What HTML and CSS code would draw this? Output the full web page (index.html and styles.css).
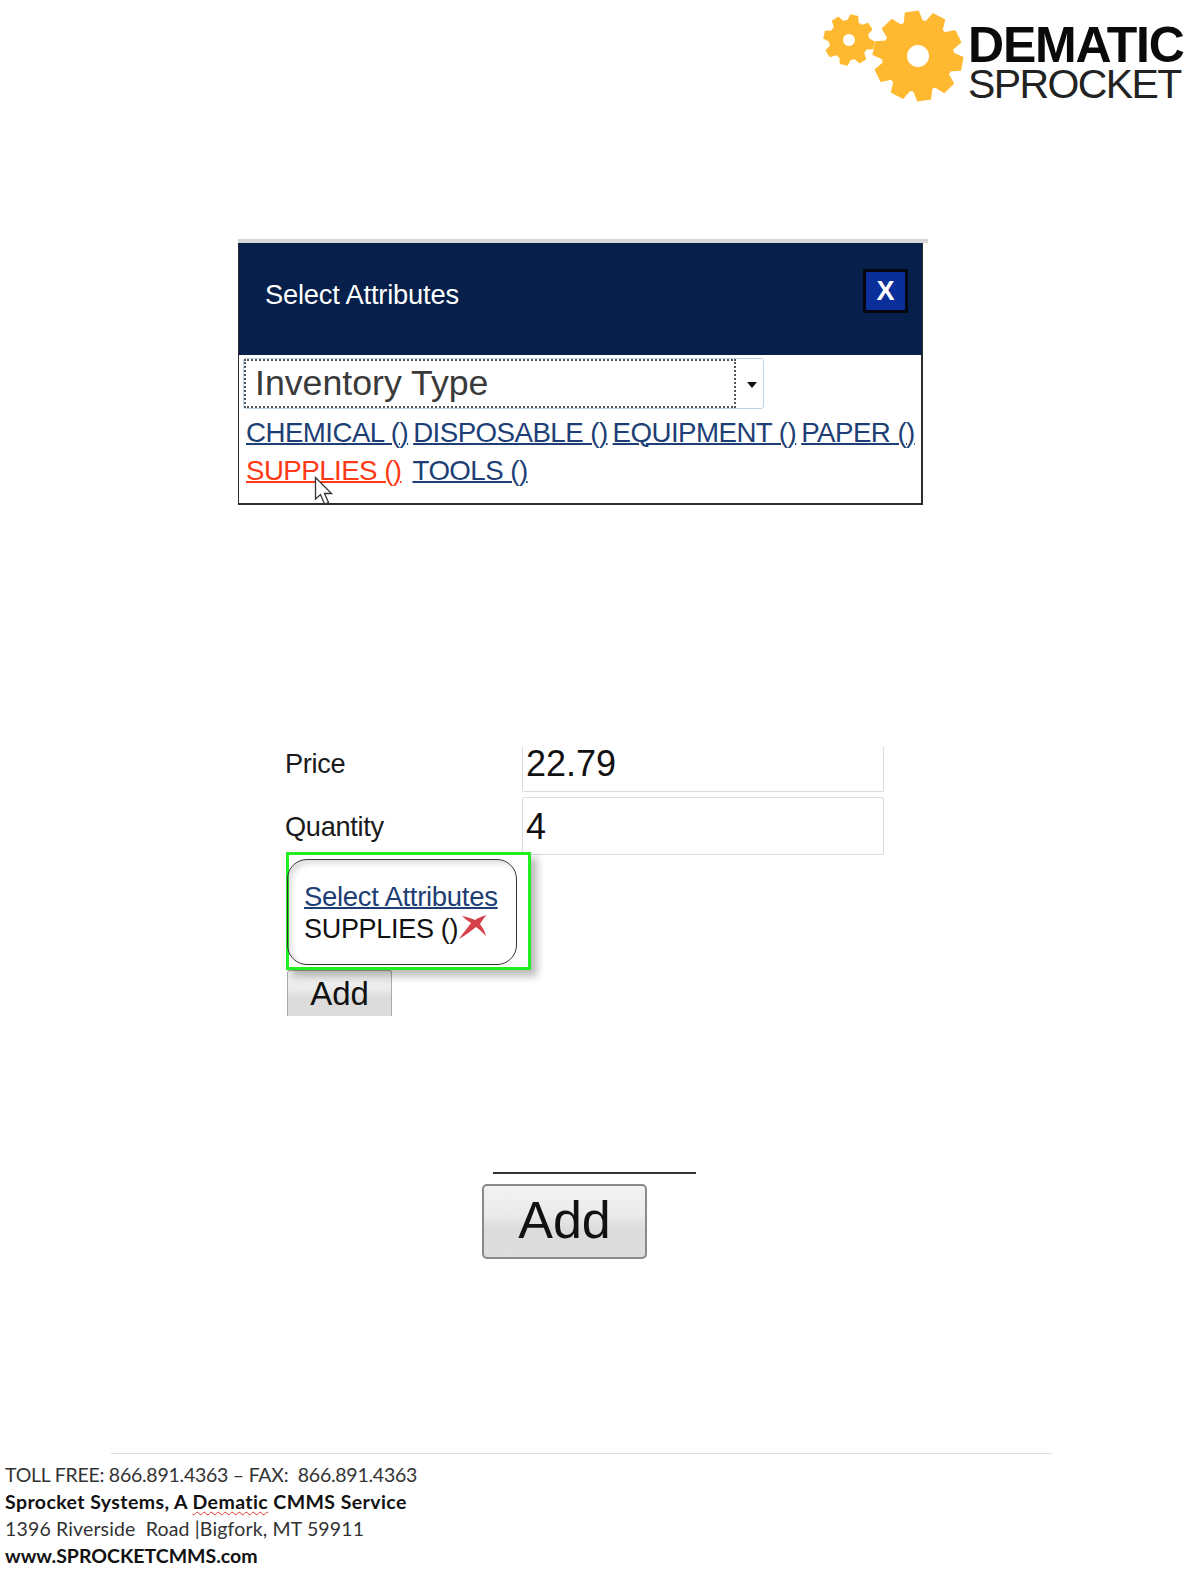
FILE: index.html
```html
<!DOCTYPE html>
<html lang="en">
<head>
<meta charset="utf-8">
<title>Select Attributes</title>
<link rel="stylesheet" href="styles.css">
</head>
<body>
<svg class="defs" width="0" height="0" aria-hidden="true">
  <defs>
    <polygon id="tooth-big" points="-10,-33 -7,-45 7,-45 10,-33"/>
    <polygon id="tooth-small" points="-6,-18 -4,-25.500 4,-25.500 6,-18"/>
  </defs>
</svg>
<header class="logo">
  <svg class="gears" width="146" height="96" viewBox="0 0 146 96" aria-hidden="true">
    <g class="gear" transform="translate(29 30) rotate(12)">
      <path fill-rule="evenodd" d="M0-20A20 20 0 1 1 0 20A20 20 0 1 1 0-20ZM0-6A6 6 0 1 0 0 6A6 6 0 1 0 0-6Z"/>
      <use href="#tooth-small"/><use href="#tooth-small" transform="rotate(45)"/><use href="#tooth-small" transform="rotate(90)"/><use href="#tooth-small" transform="rotate(135)"/><use href="#tooth-small" transform="rotate(180)"/><use href="#tooth-small" transform="rotate(225)"/><use href="#tooth-small" transform="rotate(270)"/><use href="#tooth-small" transform="rotate(315)"/>
    </g>
    <g class="gear" transform="translate(98 46) rotate(-8)">
      <path fill-rule="evenodd" d="M0-36A36 36 0 1 1 0 36A36 36 0 1 1 0-36ZM0-11A11 11 0 1 0 0 11A11 11 0 1 0 0-11Z"/>
      <use href="#tooth-big"/><use href="#tooth-big" transform="rotate(36)"/><use href="#tooth-big" transform="rotate(72)"/><use href="#tooth-big" transform="rotate(108)"/><use href="#tooth-big" transform="rotate(144)"/><use href="#tooth-big" transform="rotate(180)"/><use href="#tooth-big" transform="rotate(216)"/><use href="#tooth-big" transform="rotate(252)"/><use href="#tooth-big" transform="rotate(288)"/><use href="#tooth-big" transform="rotate(324)"/>
    </g>
  </svg>
  <div class="wordmark">
    <div class="word-top">DEMATIC</div>
    <div class="word-bottom">SPROCKET</div>
  </div>
</header>

<section class="modal-frame">
  <div class="modal">
    <div class="modal-head">
      <span class="modal-title">Select Attributes</span>
      <span class="modal-close">X</span>
    </div>
    <div class="modal-body">
      <div class="select">
        <div class="select-value">Inventory Type</div>
        <div class="select-arrow"></div>
      </div>
      <div class="attr-links">
        <a class="attr">CHEMICAL ()</a>
        <a class="attr">DISPOSABLE ()</a>
        <a class="attr">EQUIPMENT ()</a>
        <a class="attr">PAPER ()</a>
        <a class="attr attr-hot">SUPPLIES ()</a>
        <a class="attr">TOOLS ()</a>
      </div>
      <svg class="cursor" width="20" height="30" viewBox="0 0 20 30" aria-hidden="true">
        <path d="M1.500 1.500V23L6.500 18.500L10.500 28L14.500 26.500L10.500 17.500H17.500Z"/>
      </svg>
    </div>
  </div>
</section>

<section class="form">
  <div class="form-row form-row-price">
    <label class="form-label">Price</label>
    <input class="form-input form-input-clipped" value="22.79" readonly>
  </div>
  <div class="form-row form-row-qty">
    <label class="form-label">Quantity</label>
    <input class="form-input" value="4" readonly>
  </div>
  <div class="highlight">
    <div class="pill">
      <a class="pill-link">Select Attributes</a>
      <div class="pill-value">SUPPLIES ()<svg class="remove" width="30" height="26" viewBox="0 0 30 26" aria-hidden="true"><path d="M1 25C6 18 10 13 13 9C10 7 7 5 4 2C9 3 13 4 17 6C20 4 24 2 29 1C26 3 24 7 22 10C24 13 27 17 28 22C24 18 21 15 18 13C13 17 8 21 1 25Z"/></svg></div>
    </div>
  </div>
  <button class="btn btn-small" type="button">Add</button>
</section>

<section class="big-add">
  <div class="big-rule"></div>
  <button class="btn btn-big" type="button">Add</button>
</section>

<footer class="foot">
  <div class="foot-rule"></div>
  <p class="foot-line foot-phone">TOLL FREE: 866.891.4363 – FAX:&nbsp; 866.891.4363</p>
  <p class="foot-line foot-bold foot-company">Sprocket Systems, A <span class="squiggle">Dematic</span> CMMS Service</p>
  <p class="foot-line foot-address">1396 Riverside&nbsp; Road |Bigfork, MT 59911</p>
  <p class="foot-line foot-bold">www.SPROCKETCMMS.com</p>
</footer>
</body>
</html>
```
FILE: styles.css
```css
* { box-sizing: border-box; }
html, body { margin: 0; padding: 0; }
body {
  width: 1190px;
  height: 1581px;
  overflow: hidden;
  background: #fff;
  font-family: "Liberation Sans", Arial, sans-serif;
  color: #111;
}
.defs { display: block; height: 0; }

/* logo */
.logo {
  display: flex;
  justify-content: flex-end;
  align-items: flex-start;
  gap: 2px;
  height: 239px;
  padding: 8px 6px 0 0;
}
.gears { fill: #ffb931; display: block; margin-top: 2px; }
.gear { fill: #ffb931; }
.wordmark { width: 216px; margin-top: 15px; color: #0a0a0a; }
.word-top {
  font-size: 50px;
  line-height: 44px;
  font-weight: 700;
  letter-spacing: -1.2px;
}
.word-bottom {
  font-size: 41px;
  line-height: 35px;
  letter-spacing: -1.6px;
  color: #222;
}

/* modal */
.modal-frame {
  margin-left: 238px;
  width: 690px;
  border-top: 4px solid #d6d6d6;
}
.modal {
  width: 685px;
  height: 262px;
  border: 2px solid #2c2c2c;
  border-top-color: #06204c;
  border-left-width: 1px;
}
.modal-head {
  height: 111px;
  background: #061f4b;
  display: flex;
  justify-content: space-between;
  align-items: flex-start;
  padding: 25px 14px 0 26px;
  margin: -1px -1px 0 0;
}
.modal-title {
  color: #fff;
  font-size: 27.300px;
  line-height: 52px;
  letter-spacing: -0.2px;
}
.modal-close {
  width: 45px;
  height: 44px;
  background: #0a2f9a;
  border: 3px solid #05070f;
  color: #fff;
  font-weight: 700;
  font-size: 27px;
  line-height: 38px;
  text-align: center;
}
.modal-body { position: relative; padding: 3px 0 0 4px; }
.select {
  width: 521px;
  height: 51px;
  display: flex;
  border: 1.500px solid #b9d5ee;
  border-radius: 3px;
}
.select-value {
  width: 492px;
  border: 2px dotted #555;
  padding-left: 9px;
  font-size: 35.700px;
  line-height: 45px;
  color: #3a3a3a;
}
.select-arrow {
  width: 0;
  height: 0;
  margin: 23px 0 0 11px;
  border-left: 5px solid transparent;
  border-right: 5px solid transparent;
  border-top: 6px solid #111;
}
.attr-links {
  display: flex;
  flex-wrap: wrap;
  column-gap: 5px;
  padding: 5px 0 0 3px;
}
.attr {
  font-size: 27.700px;
  line-height: 38px;
  letter-spacing: -0.55px;
  color: #1d3f75;
  text-decoration: underline;
  text-decoration-thickness: 1.500px;
}
.attr-hot { color: #ff3a16; margin-right: 6px; }
.cursor {
  position: absolute;
  left: 75px;
  top: 121px;
  fill: #fff;
  stroke: #333;
  stroke-width: 1.300;
}

/* form */
.form { margin: 241px 0 0 286px; width: 600px; }
.form-row { display: flex; align-items: center; }
.form-row-price { height: 46px; }
.form-row-qty { height: 58px; margin-top: 5px; }
.form-label {
  width: 236px;
  margin-left: -1px;
  margin-right: 1px;
  font-size: 27.200px;
  letter-spacing: -0.3px;
  color: #1a1a1a;
}
.form-row-price .form-label { padding-bottom: 11px; }
.form-row-qty .form-label { padding-top: 2px; }
.form-input {
  width: 362px;
  height: 100%;
  border: 1px solid #dcdcdc;
  border-radius: 2px;
  padding: 2px 0 0 3px;
  font: 36px "Liberation Sans", Arial, sans-serif;
  color: #111;
  background: #fff;
  outline: none;
}
.form-input-clipped { border-top: 0; padding: 0 0 9px 3px; }
.highlight {
  width: 245px;
  height: 118px;
  margin-top: -3px;
  border: 3px solid #22ee22;
  position: relative;
  box-shadow: 6px 6px 8px rgba(0,0,0,.28);
  background: #fff;
  padding: 4px 11px 0 0;
}
.pill {
  height: 106px;
  margin-left: -2px;
  border: 1.500px solid #333;
  border-radius: 20px;
  padding: 20px 0 0 16px;
  box-shadow: inset 4px 4px 5px rgba(0,0,0,.12);
}
.pill-link {
  display: inline-block;
  font-size: 27.500px;
  line-height: 33px;
  letter-spacing: -0.3px;
  color: #1d3f75;
  text-decoration: underline;
  text-decoration-thickness: 1.500px;
}
.pill-value {
  display: flex;
  align-items: flex-start;
  font-size: 27px;
  line-height: 33px;
  letter-spacing: -0.3px;
  color: #111;
}
.remove { fill: #d6404a; margin-top: 1px; }
.btn {
  display: block;
  font-family: "Liberation Sans", Arial, sans-serif;
  color: #111;
  background: linear-gradient(#f2f2f2 0, #ebebeb 40%, #dcdcdc 60%, #dddddd 100%);
  padding: 0;
}
.btn-small {
  width: 105px;
  height: 46px;
  margin: 0 0 0 1px;
  border: 1px solid #aaa;
  border-bottom: 0;
  border-radius: 3px 3px 0 0;
  font-size: 33px;
  line-height: 42px;
}

/* big add */
.big-add { margin: 156px 0 0 482px; width: 214px; }
.big-rule {
  margin-left: 11px;
  height: 2px;
  background: #333;
}
.btn-big {
  width: 165px;
  height: 75px;
  margin-top: 10px;
  border: 2px solid #8a8a8a;
  border-radius: 5px;
  font-size: 52px;
  line-height: 66px;
  padding-bottom: 4px;
}

/* footer */
.foot { margin-top: 194px; padding-left: 5px; }
.foot-rule {
  width: 941px;
  height: 1px;
  margin: 0 0 7px 106px;
  background: #dcdcdc;
}
.foot-line {
  margin: 0;
  font-family: Lato, "Open Sans", sans-serif;
  font-size: 19.500px;
  line-height: 27px;
  color: #333;
}
.foot-bold { font-weight: 700; color: #111; }
.foot-phone { letter-spacing: -0.25px; }
.foot-company { letter-spacing: 0.42px; }
.foot-address { letter-spacing: 0.15px; }
.squiggle {
  text-decoration: underline wavy #d33;
  text-decoration-thickness: 1px;
  text-underline-offset: 2px;
}
```
